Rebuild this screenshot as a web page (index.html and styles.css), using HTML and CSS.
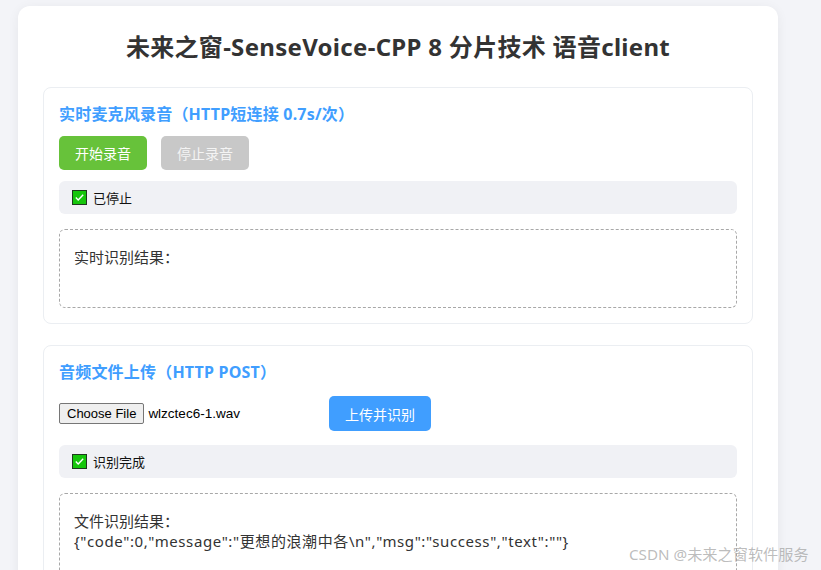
FILE: index.html
```html
<!DOCTYPE html>
<html lang="zh-CN">
<head>
  <meta charset="UTF-8">
  <title>未来之窗-SenseVoice-CPP 语音client</title>
  <link rel="stylesheet" href="styles.css">
</head>
<body>
  <div class="container">
    <h1>未来之窗-SenseVoice-CPP 8 分片技术 语音client</h1>

    <div class="card">
      <h3>实时麦克风录音（HTTP短连接 0.7s/次）</h3>
      <div class="btn-row">
        <button class="btn btn-start">开始录音</button>
        <button class="btn btn-stop" disabled>停止录音</button>
      </div>
      <div class="status">
        <svg class="ok" viewBox="0 0 15 15" width="15" height="15"><rect x="0.5" y="0.5" width="14" height="14" fill="#16c60c" stroke="#1e3a1e"/><path d="M3.8 7.6 L6.2 10 L11.2 4.8" fill="none" stroke="#fff" stroke-width="1.4"/></svg>
        <span>已停止</span>
      </div>
      <div class="result">实时识别结果：</div>
    </div>

    <div class="card">
      <h3>音频文件上传（HTTP POST）</h3>
      <div class="file-row">
        <div class="file-pick">
          <button class="file-btn">Choose File</button>
          <span class="file-name">wlzctec6-1.wav</span>
        </div>
        <button class="btn btn-upload">上传并识别</button>
      </div>
      <div class="status status-file">
        <svg class="ok" viewBox="0 0 15 15" width="15" height="15"><rect x="0.5" y="0.5" width="14" height="14" fill="#16c60c" stroke="#1e3a1e"/><path d="M3.8 7.6 L6.2 10 L11.2 4.8" fill="none" stroke="#fff" stroke-width="1.4"/></svg>
        <span>识别完成</span>
      </div>
      <div class="result result-file">文件识别结果：<br><span class="json">{"code":0,"message":"更想的浪潮中各\n","msg":"success","text":""}</span></div>
    </div>
  </div>

  <div class="watermark">CSDN @未来之窗软件服务</div>
</body>
</html>
```

FILE: styles.css
```css
body {
  background-color: #f3f4f8;
  color: #333;
  font-family: "Noto Sans", "Noto Sans CJK SC", sans-serif;
  margin: 0;
  padding: 6px 0 0 18px;
  overflow: hidden;
}

.container {
  width: 710px;
  background-color: #fff;
  border-radius: 12px;
  box-shadow: 0 2px 12px rgba(0, 0, 0, 0.06);
  padding: 25px 25px 20px;
}

h1 {
  font-size: 24px;
  font-weight: bold;
  color: #333;
  text-align: center;
  letter-spacing: 0.3px;
  margin: 0 0 24px;
  line-height: 32px;
}

.card {
  border: 1px solid #ebeef2;
  border-radius: 8px;
  padding: 15px;
  margin-bottom: 21px;
}

.card h3 {
  color: #409eff;
  font-size: 16px;
  font-weight: bold;
  letter-spacing: 0.2px;
  margin: 0 0 10px;
  line-height: 23px;
}

.btn-row {
  display: flex;
  gap: 14px;
  margin-bottom: 11px;
}

.btn {
  height: 34px;
  width: 88px;
  border: none;
  border-radius: 5px;
  color: #fff;
  font-family: inherit;
  font-size: 14px;
  padding: 0;
  cursor: pointer;
}

.btn-start {
  background-color: #67c23a;
}

.btn-stop {
  background-color: #c8c8c8;
  color: #f4f4f4;
}

.btn-upload {
  background-color: #409eff;
  width: 102px;
  height: 35px;
}

.status {
  background-color: #f0f1f5;
  border-radius: 6px;
  height: 33px;
  box-sizing: border-box;
  padding: 0 13px;
  display: flex;
  align-items: center;
  gap: 6px;
  font-size: 13px;
  color: #111;
  margin-bottom: 15px;
}

.ok {
  display: block;
}

.result {
  border: 1px dashed #a8a8a8;
  border-radius: 6px;
  min-height: 79px;
  box-sizing: border-box;
  padding: 17px 14px;
  font-size: 15px;
  line-height: 20px;
  color: #333;
}

.result-file {
  min-height: 100px;
}

.json {
  letter-spacing: 0.6px;
}

.file-row {
  display: flex;
  align-items: center;
  padding-top: 2px;
  margin-bottom: 14px;
}

.file-pick {
  width: 270px;
  display: flex;
  align-items: center;
  gap: 4px;
}

.file-btn {
  height: 21px;
  padding: 0 7px;
  background-color: #efefef;
  border: 1px solid #767676;
  border-radius: 2px;
  font-family: "Liberation Sans", Arial, sans-serif;
  font-size: 13px;
  color: #000;
}

.file-name {
  font-family: "Liberation Sans", Arial, sans-serif;
  font-size: 13.5px;
  color: #000;
}

.watermark {
  position: absolute;
  left: 629px;
  top: 542px;
  font-size: 15.2px;
  color: rgba(160, 160, 160, 0.7);
  white-space: nowrap;
}
```
